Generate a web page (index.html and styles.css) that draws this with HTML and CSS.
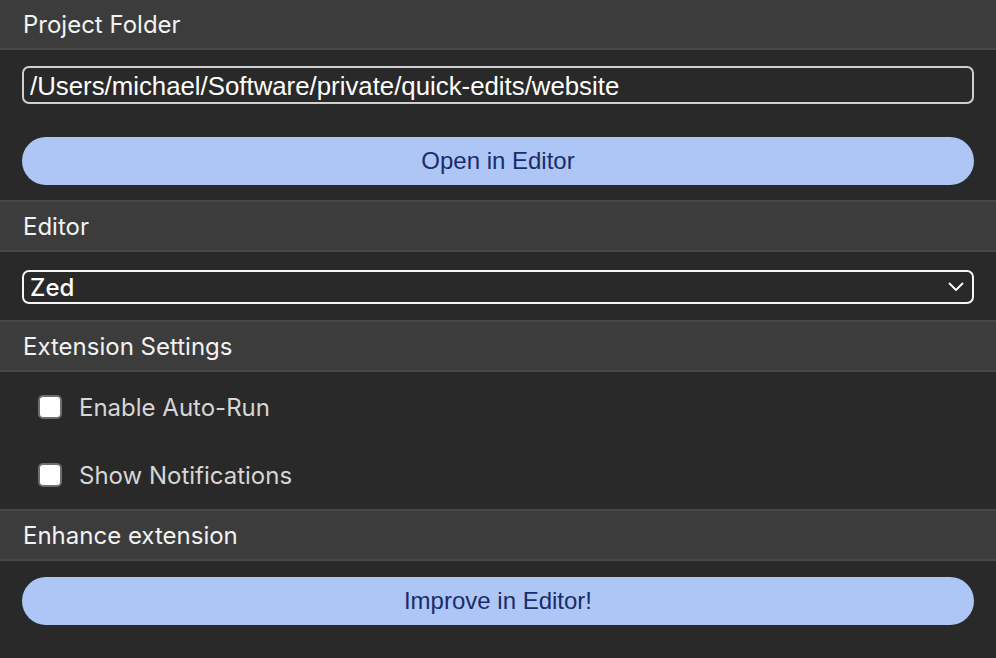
FILE: index.html
```html
<!DOCTYPE html>
<html>
<head>
<meta charset="utf-8">
<link rel="stylesheet" href="styles.css">
</head>
<body>
<div class="panel">
  <div class="section-header first">Project Folder</div>
  <div class="section-body folder-body">
    <input class="text-input" type="text" value="/Users/michael/Software/private/quick-edits/website">
    <button class="pill-btn">Open in Editor</button>
  </div>

  <div class="section-header">Editor</div>
  <div class="section-body editor-body">
    <div class="select-wrap">
      <select class="select">
        <option>Zed</option>
      </select>
      <svg class="chevron" width="16" height="10" viewBox="0 0 16 10"><path d="M1.5 1.5 L8 8 L14.5 1.5" fill="none" stroke="#fff" stroke-width="1.8" stroke-linecap="round" stroke-linejoin="round"/></svg>
    </div>
  </div>

  <div class="section-header">Extension Settings</div>
  <div class="section-body settings-body">
    <label class="check-row"><input type="checkbox" class="check"><span>Enable Auto-Run</span></label>
    <label class="check-row"><input type="checkbox" class="check"><span>Show Notifications</span></label>
  </div>

  <div class="section-header">Enhance extension</div>
  <div class="section-body enhance-body">
    <button class="pill-btn">Improve in Editor!</button>
  </div>
</div>
</body>
</html>
```
FILE: styles.css
```css
html, body {
  margin: 0;
  padding: 0;
  background: #292929;
}
body {
  width: 996px;
  height: 658px;
  overflow: hidden;
  font-family: Inter, "Noto Sans", sans-serif;
}
.panel {
  display: flex;
  flex-direction: column;
}
.section-header {
  height: 48px;
  box-sizing: content-box;
  background: #3c3c3c;
  border-top: 2px solid #474747;
  border-bottom: 2px solid #474747;
  color: #f2f2f2;
  font-size: 24px;
  display: flex;
  align-items: center;
  padding: 0 23px;
}
.section-header.first {
  border-top: none;
}
.section-body {
  display: flex;
  flex-direction: column;
  padding: 0 22px;
}
.folder-body {
  padding-top: 16px;
  padding-bottom: 15px;
  gap: 33px;
}
.text-input {
  height: 38px;
  box-sizing: border-box;
  background: #292929;
  border: 2px solid #cfcfcf;
  border-radius: 7px;
  color: #fff;
  font-family: "Liberation Sans", Arial, sans-serif;
  font-size: 25.8px;
  padding: 3px 6px 0;
  outline: none;
}
.pill-btn {
  height: 48px;
  border: none;
  border-radius: 24px;
  background: #aec6f5;
  color: #1a2d6a;
  font-family: "Liberation Sans", Arial, sans-serif;
  font-size: 24px;
  cursor: pointer;
}
.editor-body {
  padding-top: 18px;
  padding-bottom: 16px;
}
.select-wrap {
  position: relative;
  height: 34px;
}
.select {
  appearance: none;
  -webkit-appearance: none;
  width: 100%;
  height: 34px;
  box-sizing: border-box;
  background: #292929;
  border: 2px solid #f5f5f5;
  border-radius: 7px;
  color: #fff;
  font-family: Inter, "Noto Sans", sans-serif;
  font-size: 24px;
  font-weight: 500;
  padding: 0 6px;
  outline: none;
}
.chevron {
  position: absolute;
  right: 10px;
  top: 12px;
  pointer-events: none;
}
.settings-body {
  padding: 23px 38px 22px;
  gap: 44px;
}
.check-row {
  display: flex;
  align-items: center;
  gap: 17px;
  height: 24px;
  color: #d6d6d6;
  font-size: 24px;
}
.check {
  appearance: none;
  -webkit-appearance: none;
  width: 24px;
  height: 24px;
  margin: 0;
  box-sizing: border-box;
  background: #fff;
  border: 2px solid #6e6e6e;
  border-radius: 5px;
}
.enhance-body {
  padding-top: 16px;
}
```
